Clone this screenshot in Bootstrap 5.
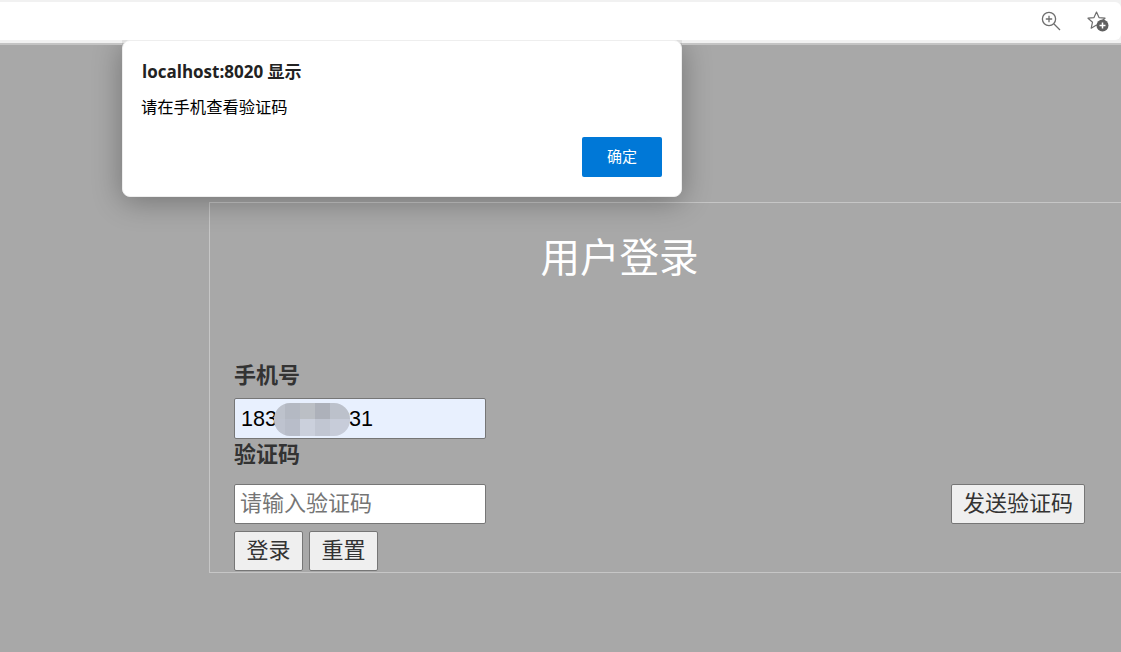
<!DOCTYPE html>
<html lang="zh-CN">
<head>
<meta charset="utf-8">
<title>用户登录</title>
<link href="https://cdn.jsdelivr.net/npm/bootstrap@5.3.0/dist/css/bootstrap.min.css" rel="stylesheet">
<style>
html,body{height:100%;margin:0;}
body{background:#a8a8a8;overflow:hidden;position:relative;font-family:"Liberation Sans","Noto Sans CJK SC",sans-serif;color:#333;}
.topbar{height:45px;background:#f1f1f1;padding-top:2px;border-bottom:2px solid #c4c4c4;}
.toolstrip{height:38px;background:#fff;border-radius:0 6px 6px 0;padding-right:11px;}
.stage{padding:157px 0 0 209px;}
.loginpanel{width:1100px;height:371px;flex:none;border:1px solid #c6c6c6;border-right:0;}
.logintitle{width:819px;margin:0;padding-top:30px;height:158px;text-align:center;font-size:39.5px;line-height:50px;font-weight:400;color:#fff;font-family:"Liberation Sans","Noto Sans CJK SC",sans-serif;}
.formarea{padding-left:24px;width:875px;}
.fieldlabel{font-size:22px;font-weight:700;line-height:30px;color:#333;margin:0 0 7px;display:block;}
.fieldlabel.second{margin:1px 0 14px;}
.fieldbox{width:252px;height:40px;border:1px solid #767676;border-radius:2px;padding:1px 5px;font-size:22px;font-family:inherit;color:#000;background:#fff;outline:0;}
.fieldbox::placeholder{color:#757575;opacity:1;}
.fieldbox.filled{background:#e8f0fe;height:41px;font-size:21.6px;padding-left:6px;}
.plainbtn{height:40px;background:#efefef;border:1px solid #767676;border-radius:2px;padding:0 11px;font-size:22px;line-height:36px;color:#333;font-family:inherit;}
.plainbtn.shortbtn{width:69px;padding:0;}
.btnrow{gap:6px;margin-top:7px;}
.maskpatch{position:absolute;left:274px;top:403px;width:76px;height:33px;border-radius:16px;overflow:hidden;display:grid;grid-template-columns:11px 15px 15px 15px 20px;grid-template-rows:16px 17px;}
.dialogbox{position:absolute;left:122px;top:40px;width:560px;height:157px;background:#fff;border:1px solid #eee;border-radius:8px;box-shadow:0 4px 30px rgba(0,0,0,.32);clip-path:polygon(0 0,560px 0,560px 5px,620px 5px,620px 220px,-60px 220px,-60px 5px,0 5px);padding:19px;color:#000;font-family:"Noto Sans CJK SC","Liberation Sans",sans-serif;}
.dialogtitle{font-size:17px;font-weight:700;line-height:24px;color:#222;font-family:"Open Sans","Noto Sans CJK SC",sans-serif;margin:0 0 10px;}
.dialogtext{font-size:16.3px;line-height:24px;margin:0 0 0 -1px;}
.okbtn{position:absolute;right:19px;bottom:19px;width:80px;height:40px;background:#0078d7;border:0;border-radius:2px;color:#fff;font-size:15px;font-family:inherit;padding:0 0 2px;}
</style>
</head>
<body>
<div class="topbar">
  <div class="toolstrip d-flex justify-content-end align-items-center gap-4">
    <svg width="22" height="22" viewBox="0 0 22 22" fill="none" stroke="#6e6e6e" stroke-width="1.3" aria-label="缩放"><circle cx="9" cy="9" r="6.6"/><path d="M14 14l6 6M9 5.8v6.4M5.8 9h6.4"/></svg>
    <svg width="24" height="24" viewBox="0 0 24 24" aria-label="收藏"><path d="M10.5 3l2.5 5.6 6 .6-4.5 4 1.3 6-5.3-3.1-5.3 3.1 1.3-6-4.5-4 6-.6z" fill="none" stroke="#6e6e6e" stroke-width="1.2" stroke-linejoin="round"/><circle cx="16.5" cy="16.5" r="6" fill="#5f5f5f"/><path d="M16.5 13.5v6M13.5 16.5h6" stroke="#fff" stroke-width="1.5"/></svg>
  </div>
</div>
<div class="stage d-flex">
  <div class="loginpanel">
    <h1 class="logintitle">用户登录</h1>
    <form class="formarea">
      <label class="fieldlabel" for="ph">手机号</label>
      <input id="ph" class="fieldbox filled d-block" value="18300000031">
      <label class="fieldlabel second" for="vc">验证码</label>
      <div class="d-flex justify-content-between align-items-center">
        <input id="vc" class="fieldbox" placeholder="请输入验证码">
        <button type="button" class="plainbtn">发送验证码</button>
      </div>
      <div class="d-flex btnrow">
        <button type="button" class="plainbtn shortbtn">登录</button>
        <button type="button" class="plainbtn shortbtn">重置</button>
      </div>
    </form>
  </div>
</div>
<div class="maskpatch">
  <i style="background:#bdc2cc"></i><i style="background:#b4b9c3"></i><i style="background:#bbbfc5"></i><i style="background:#adb1ba"></i><i style="background:#bcc1cb"></i>
  <i style="background:#bec3cf"></i><i style="background:#b8bdc9"></i><i style="background:#cbd0dc"></i><i style="background:#c1c6d2"></i><i style="background:#c7ccd9"></i>
</div>
<div class="dialogbox">
  <p class="dialogtitle">localhost:8020 显示</p>
  <p class="dialogtext">请在手机查看验证码</p>
  <button type="button" class="okbtn">确定</button>
</div>
<script src="https://cdn.jsdelivr.net/npm/bootstrap@5.3.0/dist/js/bootstrap.bundle.min.js"></script>
</body>
</html>
